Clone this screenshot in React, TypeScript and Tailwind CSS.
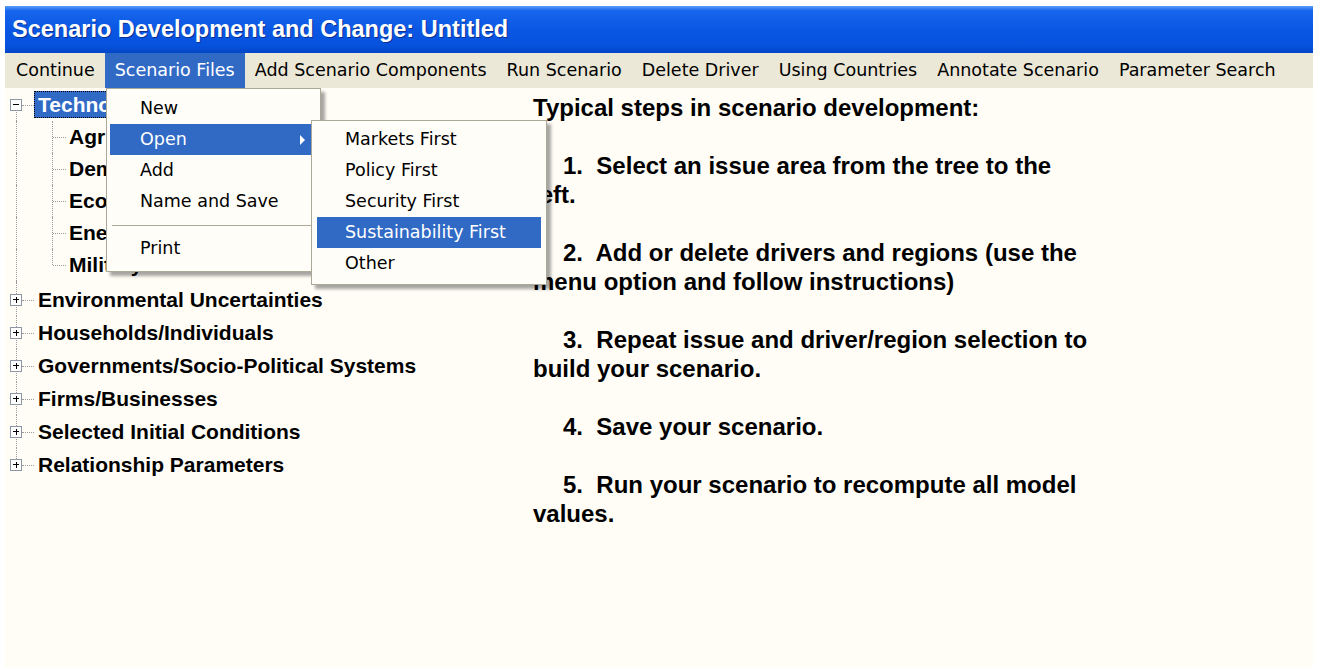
const menuItems = [
  "Continue",
  "Scenario Files",
  "Add Scenario Components",
  "Run Scenario",
  "Delete Driver",
  "Using Countries",
  "Annotate Scenario",
  "Parameter Search",
];

const children = ["Agriculture", "Demographics", "Economics", "Energy", "Military"];

const roots = [
  "Environmental Uncertainties",
  "Households/Individuals",
  "Governments/Socio-Political Systems",
  "Firms/Businesses",
  "Selected Initial Conditions",
  "Relationship Parameters",
];

const openItems = ["Markets First", "Policy First", "Security First", "Sustainability First", "Other"];

const ui = "font-['DejaVu_Sans',sans-serif] text-[17.5px]";

function ExpandBox({ open }: { open: boolean }) {
  return (
    <div className="absolute left-[5px] top-1/2 z-10 flex h-[12px] w-[12px] -translate-y-1/2 items-center justify-center border border-[#8d97a3] bg-white">
      <div className="relative h-[8px] w-[8px]">
        <div className="absolute left-[1px] top-[3.5px] h-[1px] w-[6px] bg-black" />
        {!open && <div className="absolute left-[3.5px] top-[1px] h-[6px] w-[1px] bg-black" />}
      </div>
    </div>
  );
}

function RootRow({ label, open, first, last, selected }: { label: string; open?: boolean; first?: boolean; last?: boolean; selected?: boolean }) {
  return (
    <div className="relative flex h-[33px] items-center">
      <div
        className={`absolute left-[11px] border-l border-dotted border-[#9a9a9a] ${first ? "top-1/2" : "top-0"} ${last ? "bottom-1/2" : "bottom-0"}`}
      />
      <div className="absolute left-[17px] top-1/2 w-[12px] border-t border-dotted border-[#9a9a9a]" />
      <ExpandBox open={!!open} />
      {selected ? (
        <span className="ml-[29px] border border-dotted border-black bg-[#316ac5] px-[3px] leading-[25px] text-white">{label}</span>
      ) : (
        <span className="ml-[33px]">{label}</span>
      )}
    </div>
  );
}

function ChildRow({ label, last }: { label: string; last?: boolean }) {
  return (
    <div className="relative flex h-[32px] items-center">
      <div className="absolute bottom-0 left-[11px] top-0 border-l border-dotted border-[#9a9a9a]" />
      <div className={`absolute left-[47px] top-0 border-l border-dotted border-[#9a9a9a] ${last ? "bottom-1/2" : "bottom-0"}`} />
      <div className="absolute left-[48px] top-1/2 w-[13px] border-t border-dotted border-[#9a9a9a]" />
      <span className="ml-[64px]">{label}</span>
    </div>
  );
}

export default function App() {
  return (
    <div className="h-[671px] w-full overflow-hidden bg-white pl-[5px] pt-[6px]">
      <div className="relative flex h-[662px] w-[1308px] flex-col">
        {/* title bar */}
        <div className="flex h-[47px] items-center bg-[linear-gradient(180deg,#5a9cf8_0%,#1766ec_10%,#0a57e4_50%,#0652dd_85%,#0345c6_100%)] pl-[7px]">
          <span className="font-['Liberation_Sans',sans-serif] text-[23.5px] font-bold text-white [text-shadow:1px_1px_0_#0a2f8f]">
            Scenario Development and Change: Untitled
          </span>
        </div>

        {/* menu bar */}
        <div className={`flex h-[35px] items-stretch bg-[#ebe8d7] pl-[1px] text-black ${ui}`}>
          {menuItems.map((m) => (
            <div
              key={m}
              className={`flex items-center px-[10px] ${m === "Scenario Files" ? "bg-[#316ac5] text-white" : ""}`}
            >
              {m}
            </div>
          ))}
        </div>

        {/* client area */}
        <div className="flex flex-1 bg-[#fffdf6] bg-[radial-gradient(circle,#f4f1e6_0.6px,transparent_0.7px)] bg-[length:4px_4px] font-['Liberation_Sans',sans-serif] font-bold text-black">
          <div className="w-[528px] text-[21px]">
            <RootRow label="Technology" open first selected />
            {children.map((c, i) => (
              <ChildRow key={c} label={c} last={i === children.length - 1} />
            ))}
            <div className="relative h-[2px]">
              <div className="absolute bottom-0 left-[11px] top-0 border-l border-dotted border-[#9a9a9a]" />
            </div>
            {roots.map((r, i) => (
              <RootRow key={r} label={r} last={i === roots.length - 1} />
            ))}
          </div>

          <div className="whitespace-pre pt-[5px] text-[24px] leading-[29px]">
            <div>Typical steps in scenario development:</div>
            <div className="mt-[29px] pl-[30px]">1.  Select an issue area from the tree to the</div>
            <div>left.</div>
            <div className="mt-[29px] pl-[30px]">2.  Add or delete drivers and regions (use the</div>
            <div>menu option and follow instructions)</div>
            <div className="mt-[29px] pl-[30px]">3.  Repeat issue and driver/region selection to</div>
            <div>build your scenario.</div>
            <div className="mt-[29px] pl-[30px]">4.  Save your scenario.</div>
            <div className="mt-[29px] pl-[30px]">5.  Run your scenario to recompute all model</div>
            <div>values.</div>
          </div>
        </div>

        {/* Scenario Files dropdown */}
        <div className={`absolute left-[101px] top-[82px] z-20 h-[184px] w-[215px] border border-[#aca899] bg-[#fffdf8] pt-[4px] text-black shadow-[4px_4px_3px_rgba(0,0,0,0.35)] ${ui}`}>
          <div className="mx-[3px] flex h-[31px] items-center pl-[30px]">New</div>
          <div className="mx-[3px] flex h-[31px] items-center justify-between bg-[#316ac5] pl-[30px] pr-[12px] text-white">
            <span>Open</span>
            <span className="h-0 w-0 border-y-[5px] border-l-[5px] border-y-transparent border-l-white" />
          </div>
          <div className="mx-[3px] flex h-[31px] items-center pl-[30px]">Add</div>
          <div className="mx-[3px] flex h-[31px] items-center pl-[30px]">Name and Save</div>
          <div className="flex h-[16px] items-center px-[5px]">
            <div className="h-0 w-full border-t border-[#aca899]" />
          </div>
          <div className="mx-[3px] flex h-[31px] items-center pl-[30px]">Print</div>
        </div>

        {/* Open submenu */}
        <div className={`absolute left-[306px] top-[114px] z-30 h-[165px] w-[236px] border border-[#aca899] bg-[#fffdf8] pt-[3px] text-black shadow-[4px_4px_3px_rgba(0,0,0,0.35)] ${ui}`}>
          {openItems.map((o) => (
            <div
              key={o}
              className={`mx-[5px] flex h-[31px] items-center pl-[28px] ${o === "Sustainability First" ? "bg-[#316ac5] text-white" : ""}`}
            >
              {o}
            </div>
          ))}
        </div>
      </div>
    </div>
  );
}
